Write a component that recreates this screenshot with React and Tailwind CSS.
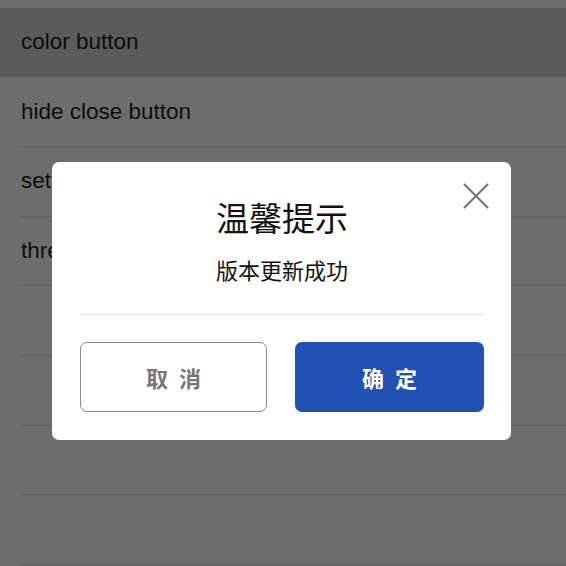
import React from "react";

const rows = [
    { label: "color button", active: true },
    { label: "hide close button" },
    { label: "set button text" },
    { label: "three buttons" },
    { label: "" },
    { label: "" },
    { label: "" },
    { label: "" },
];

function CloseIcon() {
    return (
        <svg width="26" height="26" viewBox="0 0 26 26" fill="none">
            <path
                d="M1 1 L25 25 M25 1 L1 25"
                stroke="#777777"
                strokeWidth="2.2"
                strokeLinecap="butt"
            />
        </svg>
    );
}

export default function App() {
    return (
        <div
            className="relative w-[566px] h-[566px] overflow-hidden bg-white"
            style={{ fontFamily: '"Liberation Sans", "Noto Sans CJK SC", sans-serif' }}
        >
            {/* list under the mask */}
            <div className="pt-[7.5px]">
                {rows.map((row, index) => (
                    <div
                        key={index}
                        className={`h-[69.7px] pl-[21px] ${row.active ? "bg-[#d4d4d4]" : ""}`}
                    >
                        <div
                            className={`h-full flex items-center text-[22.5px] text-[#1f1f1f] ${
                                row.active ? "" : "border-b border-[#dcdcdc]"
                            }`}
                        >
                            {row.label}
                        </div>
                    </div>
                ))}
            </div>

            {/* mask */}
            <div className="absolute inset-0 bg-black/[0.573]" />

            {/* dialog */}
            <div
                className="absolute left-[52px] top-[162px] w-[459px] bg-white rounded-[7px] pt-[34px] pb-[28px] pl-[28px] pr-[27px]"
                style={{ fontFamily: '"Noto Sans CJK SC", "Liberation Sans", sans-serif' }}
            >
                <button className="absolute top-[21px] right-[22px] w-[26px] h-[26px] flex items-center justify-center">
                    <CloseIcon />
                </button>
                <div className="text-center text-[33px] leading-[42px] text-[#111]">
                    温馨提示
                </div>
                <div className="mt-[16px] text-center text-[22px] leading-[31px] text-[#111]">
                    版本更新成功
                </div>
                <div className="mt-[29px] h-px bg-[#e3e3e3]" />
                <div className="mt-[27px] flex gap-[28px]">
                    <button className="w-[187px] h-[70px] rounded-[7px] border border-[#8a8a8a] text-[22px] font-bold text-[#777] tracking-[11px] pl-[11px]">
                        取消
                    </button>
                    <button className="flex-1 h-[70px] rounded-[7px] bg-[#2251b4] text-[22px] font-bold text-white tracking-[11px] pl-[11px]">
                        确定
                    </button>
                </div>
            </div>
        </div>
    );
}
